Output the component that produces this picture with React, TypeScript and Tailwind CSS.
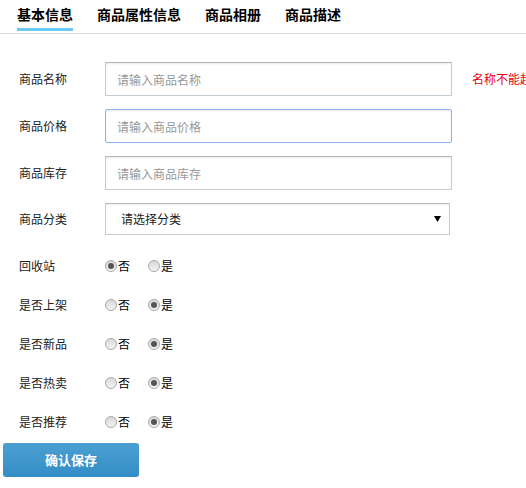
import { useState } from "react";

const tabs = ["基本信息", "商品属性信息", "商品相册", "商品描述"];

const radioRows = [
  { label: "回收站", value: "否" },
  { label: "是否上架", value: "是" },
  { label: "是否新品", value: "是" },
  { label: "是否热卖", value: "是" },
  { label: "是否推荐", value: "是" },
];

function Radio({ checked, text, onClick }: { checked: boolean; text: string; onClick: () => void }) {
  return (
    <label onClick={onClick} className="flex items-center cursor-pointer">
      <span className="w-[12px] h-[12px] rounded-full border border-[#a9a9a9] bg-gradient-to-b from-[#d9d9d9] to-[#f3f3f3] flex items-center justify-center">
        {checked && <span className="w-[6px] h-[6px] rounded-full bg-[#555]" />}
      </span>
      <span className="ml-[1px] text-[12px] text-black">{text}</span>
    </label>
  );
}

export default function App() {
  const [values, setValues] = useState(radioRows.map((r) => r.value));

  return (
    <div
      className="w-[526px] h-[488px] bg-white overflow-hidden whitespace-nowrap"
      style={{ fontFamily: '"Microsoft YaHei", "Noto Sans CJK SC", sans-serif' }}
    >
      {/* tabs */}
      <div className="flex gap-[18px] pl-[14px] h-[34px] border-b border-[#d5dde3]">
        {tabs.map((t, i) => (
          <div key={t} className="flex flex-col px-[3px]">
            <span className="text-[14px] font-bold text-black leading-[20px] mt-[4px]">{t}</span>
            {i === 0 && <span className="mt-[4px] h-[3px] w-full bg-[#6ac9f2]" />}
          </div>
        ))}
      </div>

      <div className="pt-[28px]">
        {[
          { label: "商品名称", ph: "请输入商品名称", err: "名称不能超过50个字符" },
          { label: "商品价格", ph: "请输入商品价格", focus: true },
          { label: "商品库存", ph: "请输入商品库存" },
        ].map((f) => (
          <div key={f.label} className="flex items-center mb-[13px] h-[34px]">
            <span className="w-[105px] shrink-0 pl-[19px] text-[12px] text-[#222]">{f.label}</span>
            <input
              placeholder={f.ph}
              className={
                "w-[347px] shrink-0 h-[34px] px-[11px] text-[12px] outline-none placeholder:text-[#999] shadow-[inset_0_1px_2px_rgba(0,0,0,0.08)] " +
                (f.focus
                  ? "border border-[#8fb5ec] rounded-[2px]"
                  : "border border-[#c3cdd4] border-t-[#b0b8be]")
              }
            />
            {f.err && <span className="ml-[20px] shrink-0 text-[12px] text-[#e60012]">{f.err}</span>}
          </div>
        ))}

        <div className="flex items-center h-[32px]">
          <span className="w-[105px] shrink-0 pl-[19px] text-[12px] text-[#222]">商品分类</span>
          <div className="w-[345px] shrink-0 h-[32px] border border-[#c3cdd4] border-t-[#b0b8be] flex items-center justify-between pl-[15px] pr-[8px] shadow-[inset_0_1px_2px_rgba(0,0,0,0.06)]">
            <span className="text-[12px] text-[#222]">请选择分类</span>
            <svg width="7" height="6" viewBox="0 0 7 6">
              <path d="M0 0 H7 L3.5 6 Z" fill="#000" />
            </svg>
          </div>
        </div>

        <div className="mt-[21px]">
          {radioRows.map((r, i) => (
            <div key={r.label} className="flex items-center h-[20px] mb-[19px] last:mb-[11px]">
              <span className="w-[105px] shrink-0 pl-[19px] text-[12px] text-[#222]">{r.label}</span>
              <div className="flex items-center gap-[18px]">
                {["否", "是"].map((o) => (
                  <Radio
                    key={o}
                    text={o}
                    checked={values[i] === o}
                    onClick={() => setValues(values.map((v, j) => (j === i ? o : v)))}
                  />
                ))}
              </div>
            </div>
          ))}
        </div>

        <button className="ml-[3px] w-[136px] h-[34px] rounded-[3px] bg-gradient-to-b from-[#4ba0d2] to-[#348dc6] text-white text-[13px] font-bold">
          确认保存
        </button>
      </div>
    </div>
  );
}
